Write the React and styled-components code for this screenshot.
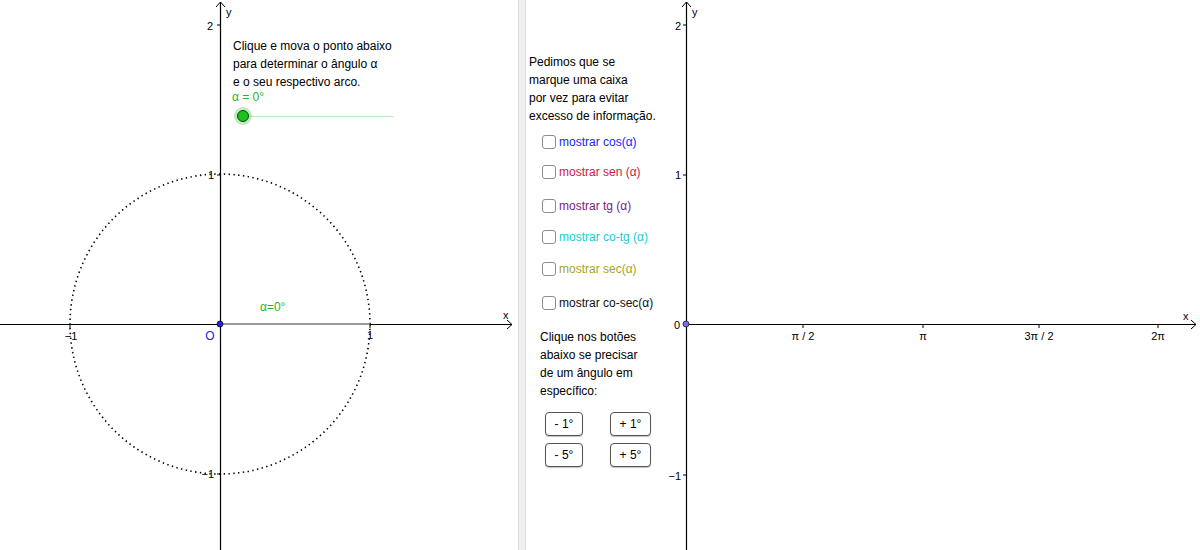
import React from 'react';
import styled, { createGlobalStyle } from 'styled-components';

const GlobalStyle = createGlobalStyle`
  html, body {
    margin: 0;
    padding: 0;
    background: #fff;
    font-family: "Liberation Sans", Arial, sans-serif;
  }
`;

const checks = [
  { label: 'mostrar cos(α)', color: '#2323ff', top: 142 },
  { label: 'mostrar sen (α)', color: '#d5173f', top: 172 },
  { label: 'mostrar tg (α)', color: '#7c1b7c', top: 206 },
  { label: 'mostrar co-tg (α)', color: '#1ccbd0', top: 237 },
  { label: 'mostrar sec(α)', color: '#a6a51c', top: 269 },
  { label: 'mostrar co-sec(α)', color: '#111', top: 303 },
];

const steps = ['- 1°', '+ 1°', '- 5°', '+ 5°'];

const xTicks = [
  { x: 277, label: 'π / 2' },
  { x: 397, label: 'π' },
  { x: 513, label: '3π / 2' },
  { x: 632, label: '2π' },
];

const Applet = styled.div`
  display: flex;
  width: 1200px;
  height: 550px;
  overflow: hidden;
  background: #fff;
`;

const GraphicsView = styled.div`
  position: relative;
  width: ${(p) => p.width}px;
  height: 550px;
  flex: none;
  overflow: hidden;
`;

const Divider = styled.div`
  width: 6px;
  height: 550px;
  flex: none;
  background: #efefef;
  border-left: 1px solid #dcdcdc;
  border-right: 1px solid #dcdcdc;
`;

const Plot = styled.svg`
  display: block;
  font-family: "Liberation Sans", Arial, sans-serif;
`;

const InfoText = styled.div`
  position: absolute;
  left: ${(p) => p.left}px;
  top: ${(p) => p.top}px;
  font-size: 12px;
  line-height: 18px;
  color: ${(p) => p.color || '#000'};
  white-space: nowrap;
`;

const SliderPoint = styled.div`
  position: absolute;
  left: 237px;
  top: 110px;
  width: 10px;
  height: 10px;
  border-radius: 50%;
  background: #19c419;
  border: 1px solid #1a3a1a;
  box-shadow: 0 0 0 3px rgba(40, 190, 40, 0.3);
`;

const SliderTrack = styled.div`
  position: absolute;
  left: 243px;
  top: 116px;
  width: 151px;
  height: 1px;
  background: #bfeabf;
`;

const CheckRow = styled.label`
  position: absolute;
  left: 16px;
  top: ${(p) => p.top - 7}px;
  display: flex;
  align-items: center;
  gap: 3px;
  font-size: 12px;
  color: ${(p) => p.color};
  white-space: nowrap;
`;

const Box = styled.span`
  width: 12px;
  height: 12px;
  border: 1.5px solid #8c8c8c;
  border-radius: 3px;
  background: #fff;
`;

const ButtonGrid = styled.div`
  position: absolute;
  left: 19px;
  top: 412px;
  display: grid;
  grid-template-columns: 38px 41px;
  column-gap: 27px;
  row-gap: 7px;
`;

const StepButton = styled.button`
  height: 24px;
  padding: 0;
  font-family: "Liberation Sans", Arial, sans-serif;
  font-size: 12px;
  color: #000;
  background: #fff;
  border: 1px solid #555;
  border-radius: 4px;
  box-shadow: 0 1px 1px rgba(0, 0, 0, 0.25);
`;

const Arrow = ({ d }) => <path d={d} fill="none" stroke="#000" strokeWidth="1" />;

const LeftPlot = () => (
  <Plot width="518" height="550">
    <circle cx="220" cy="324" r="150" fill="none" stroke="#000" strokeWidth="1.6" strokeDasharray="1.4 3.4" />
    <line x1="0" y1="324.5" x2="512" y2="324.5" stroke="#000" strokeWidth="1.2" />
    <Arrow d="M507 320 L512 324.5 L507 329" />
    <line x1="220.5" y1="2" x2="220.5" y2="550" stroke="#000" strokeWidth="1.2" />
    <Arrow d="M216 7 L220.5 2 L225 7" />
    <line x1="220" y1="324" x2="370" y2="324" stroke="#9a9a9a" strokeWidth="2" />
    {[70, 370].map((x) => (
      <line key={x} x1={x} y1="324" x2={x} y2="328" stroke="#000" />
    ))}
    {[25, 175, 474].map((y) => (
      <line key={y} x1="217" y1={y} x2="220" y2={y} stroke="#000" />
    ))}
    <g fontSize="11" fill="#000">
      <text x="503" y="319">x</text>
      <text x="226" y="16">y</text>
      <text x="213" y="30" textAnchor="end">2</text>
      <text x="214" y="179" textAnchor="end">1</text>
      <text x="214" y="478" textAnchor="end">−1</text>
      <text x="71" y="340" textAnchor="middle">−1</text>
      <text x="370" y="339" textAnchor="middle">1</text>
    </g>
    <text x="210" y="340" fontSize="12" fill="#2222ee" textAnchor="middle">O</text>
    <text x="260" y="311" fontSize="12" fill="#1fb71f">α=0°</text>
    <circle cx="220" cy="324" r="3" fill="#2424e6" stroke="#111" strokeWidth="0.8" />
  </Plot>
);

const RightPlot = () => (
  <Plot width="674" height="550">
    <line x1="160" y1="324.5" x2="670" y2="324.5" stroke="#000" strokeWidth="1.2" />
    <Arrow d="M665 320 L670 324.5 L665 329" />
    <line x1="160.5" y1="2" x2="160.5" y2="550" stroke="#000" strokeWidth="1.2" />
    <Arrow d="M156 7 L160.5 2 L165 7" />
    {xTicks.map((t) => (
      <line key={t.x} x1={t.x} y1="324" x2={t.x} y2="328" stroke="#000" />
    ))}
    {[25, 175, 475].map((y) => (
      <line key={y} x1="157" y1={y} x2="160" y2={y} stroke="#000" />
    ))}
    <g fontSize="11" fill="#000">
      <text x="657" y="320">x</text>
      <text x="166" y="16">y</text>
      <text x="155" y="30" textAnchor="end">2</text>
      <text x="155" y="179" textAnchor="end">1</text>
      <text x="154" y="329" textAnchor="end">0</text>
      <text x="155" y="480" textAnchor="end">−1</text>
      {xTicks.map((t) => (
        <text key={t.x} x={t.x} y="340" textAnchor="middle">
          {t.label}
        </text>
      ))}
    </g>
    <circle cx="160" cy="324" r="3" fill="#6d6dff" stroke="#222" strokeWidth="0.8" />
  </Plot>
);

export default function App() {
  return (
    <Applet>
      <GlobalStyle />
      <GraphicsView width={518}>
        <LeftPlot />
        <InfoText left={233} top={37}>
          Clique e mova o ponto abaixo
          <br />
          para determinar o ângulo α
          <br />e o seu respectivo arco.
        </InfoText>
        <InfoText left={232} top={88} color="#1fb71f">
          α = 0°
        </InfoText>
        <SliderTrack />
        <SliderPoint />
      </GraphicsView>
      <Divider />
      <GraphicsView width={674}>
        <RightPlot />
        <InfoText left={3} top={53}>
          Pedimos que se
          <br />
          marque uma caixa
          <br />
          por vez para evitar
          <br />
          excesso de informação.
        </InfoText>
        {checks.map((c) => (
          <CheckRow key={c.label} top={c.top} color={c.color}>
            <Box />
            {c.label}
          </CheckRow>
        ))}
        <InfoText left={14} top={328}>
          Clique nos botões
          <br />
          abaixo se precisar
          <br />
          de um ângulo em
          <br />
          específico:
        </InfoText>
        <ButtonGrid>
          {steps.map((s) => (
            <StepButton key={s}>{s}</StepButton>
          ))}
        </ButtonGrid>
      </GraphicsView>
    </Applet>
  );
}
